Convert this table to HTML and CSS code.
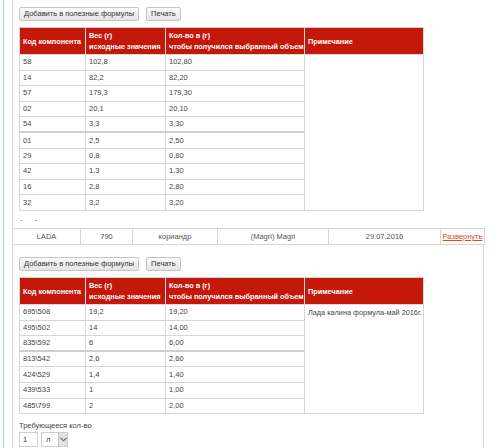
FILE: index.html
```html
<!DOCTYPE html>
<html lang="ru">
<head>
<meta charset="utf-8">
<link rel="stylesheet" href="styles.css">
</head>
<body>
<div class="page">
  <div class="block first">
    <div class="buttons">
      <button class="btn">Добавить в полезные формулы</button>
      <button class="btn">Печать</button>
    </div>
    <table class="formula">
      <colgroup><col class="c1"><col class="c2"><col class="c3"><col class="c4"></colgroup>
      <thead>
        <tr><th>Код компонента</th><th>Вес (г)<br>исходные значения</th><th>Кол-во в (г)<br>чтобы получился выбранный объем</th><th>Примечание</th></tr>
      </thead>
      <tbody>
        <tr><td>58</td><td>102,8</td><td>102,80</td><td class="note" rowspan="10"></td></tr>
        <tr><td>14</td><td>82,2</td><td>82,20</td></tr>
        <tr><td>57</td><td>179,3</td><td>179,30</td></tr>
        <tr><td>02</td><td>20,1</td><td>20,10</td></tr>
        <tr><td>54</td><td>3,3</td><td>3,30</td></tr>
        <tr class="sep"><td>01</td><td>2,5</td><td>2,50</td></tr>
        <tr><td>29</td><td>0,8</td><td>0,80</td></tr>
        <tr><td>42</td><td>1,3</td><td>1,30</td></tr>
        <tr><td>16</td><td>2,8</td><td>2,80</td></tr>
        <tr><td>32</td><td>3,2</td><td>3,20</td></tr>
      </tbody>
    </table>
    <div class="dashes">- -</div>
  </div>

  <table class="listing">
    <tr>
      <td class="l1">LADA</td><td class="l2">790</td><td class="l3">кориандр</td><td class="l4">(Magri) Magri</td><td class="l5">29.07.2016</td><td class="l6"><a href="#">Развернуть</a></td>
    </tr>
  </table>

  <div class="block second">
    <div class="buttons">
      <button class="btn">Добавить в полезные формулы</button>
      <button class="btn">Печать</button>
    </div>
    <table class="formula">
      <colgroup><col class="c1"><col class="c2"><col class="c3"><col class="c4"></colgroup>
      <thead>
        <tr><th>Код компонента</th><th>Вес (г)<br>исходные значения</th><th>Кол-во в (г)<br>чтобы получился выбранный объем</th><th>Примечание</th></tr>
      </thead>
      <tbody>
        <tr><td>695\508</td><td>19,2</td><td>19,20</td><td class="note" rowspan="7">Лада калина формула-май 2016г.</td></tr>
        <tr><td>495\502</td><td>14</td><td>14,00</td></tr>
        <tr><td>835\592</td><td>6</td><td>6,00</td></tr>
        <tr class="sep"><td>813\542</td><td>2,6</td><td>2,60</td></tr>
        <tr><td>424\529</td><td>1,4</td><td>1,40</td></tr>
        <tr><td>439\533</td><td>1</td><td>1,00</td></tr>
        <tr><td>485\799</td><td>2</td><td>2,00</td></tr>
      </tbody>
    </table>
    <div class="qty-label">Требующееся кол-во</div>
    <div class="qty">
      <span class="qty-input">1</span>
      <span class="qty-select"><span class="unit">л</span><span class="arrow"><svg width="7" height="5" viewBox="0 0 7 5"><path d="M0.5 0.8 L3.5 3.8 L6.5 0.8" fill="none" stroke="#666" stroke-width="1.1"/></svg></span></span>
    </div>
  </div>
</div>
</body>
</html>
```

FILE: styles.css
```css
* { box-sizing: border-box; }
html, body { margin: 0; padding: 0; background: #fff; }
body {
  font-family: "Liberation Sans", Arial, sans-serif;
  font-size: 7.5px;
  color: #444;
  width: 500px;
  height: 448px;
  overflow: hidden;
}
.page {
  margin-left: 3px;
  border-left: 1px solid #a9c9ee;
  height: 448px;
  padding-left: 8px;
}
.block {
  border-left: 1px solid #d6d6d6;
  padding-left: 6px;
}
.first { padding-top: 7px; height: 228px; }
.second {
  border-right: 1px solid #d6d6d6;
  width: 472px;
  padding-top: 12px;
  height: 220px;
}
.buttons { display: flex; gap: 7px; height: 14px; margin-bottom: 6px; }
.btn {
  font-family: inherit;
  font-size: 7.5px;
  color: #333;
  height: 14px;
  padding: 0 4px;
  background: linear-gradient(#fbfbfb, #e4e4e4);
  border: 1px solid #c6c6c6;
  border-radius: 2px;
  line-height: 12px;
}
.formula {
  border-collapse: collapse;
  width: 404px;
  table-layout: fixed;
}
.c1 { width: 66px; }
.c2 { width: 80px; }
.c3 { width: 139px; }
.c4 { width: 119px; }
.formula th {
  background: #c4180b;
  color: #fff;
  font-weight: bold;
  font-size: 7.3px;
  text-align: left;
  padding: 0 2px 0 3px;
  height: 27px;
  line-height: 11px;
  border: 1px solid #d9d9d9;
  border-top-color: #cfcfcf;
  white-space: nowrap;
  overflow: hidden;
}
.formula th + th { border-left: 1px solid #e8a8a0; }
.formula td {
  height: 15.6px;
  padding: 0 3px;
  border: 1px solid #d6d6d6;
  line-height: 10px;
  color: #444;
}
.formula tr.sep td { border-top: 2px solid #cfcfcf; }
.formula td.note { vertical-align: top; padding-top: 3px; white-space: nowrap; font-size: 7.3px; }
.dashes { padding-left: 1px; margin-top: 5px; letter-spacing: 5px; color: #666; line-height: 8px; }
.listing {
  border-collapse: collapse;
  width: 472px;
  table-layout: fixed;
}
.listing td {
  border: 1px solid #d6d6d6;
  height: 16px;
  text-align: center;
  color: #555;
  padding: 0;
}
.listing .l1 { width: 68px; }
.listing .l2 { width: 52px; }
.listing .l3 { width: 85px; }
.listing .l4 { width: 111px; }
.listing .l5 { width: 112px; }
.listing .l6 { width: 44px; }
.listing a { color: #e0472a; text-decoration: underline; }
.qty-label { margin-top: 7px; line-height: 9px; color: #444; }
.qty { display: flex; gap: 3px; margin-top: 2px; }
.qty-input {
  width: 19px; height: 15px;
  border: 1px solid #cfcfcf;
  padding-left: 3px;
  line-height: 13px;
  color: #333;
}
.qty-select {
  width: 27px; height: 15px;
  border: 1px solid #cfcfcf;
  display: flex;
}
.unit { flex: 1; padding-left: 4px; line-height: 13px; }
.arrow {
  width: 9px;
  background: #e2e2e2;
  border-left: 1px solid #c4c4c4;
  display: flex; align-items: center; justify-content: center;
}
```
